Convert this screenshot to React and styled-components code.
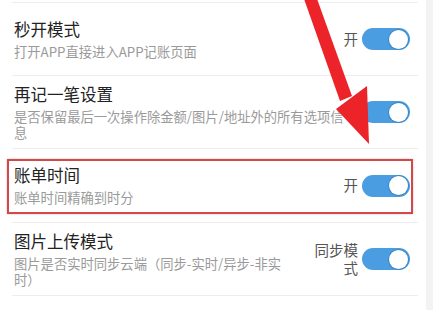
import React from "react";
import styled, { createGlobalStyle } from "styled-components";

const Global = createGlobalStyle`
  html, body { margin: 0; padding: 0; background: #f3f3f3; }
  body { font-family: "Noto Sans CJK SC", "Noto Sans", sans-serif; }
`;

const Page = styled.div`
  position: relative;
  width: 433px;
  height: 310px;
  overflow: hidden;
  background: #f3f3f3;
`;

const Card = styled.div`
  background: #fff;
  margin-right: 7px;
  height: 100%;
  padding-top: 2px;
  box-sizing: border-box;
`;

const Row = styled.div`
  position: relative;
  display: flex;
  align-items: center;
  gap: 17px;
  min-height: ${(p) => (p.$tall ? "73px" : "72px")};
  margin: 0 8px 0 12px;
  border-top: 1px solid #ededed;
`;

const TextCol = styled.div`
  flex: 1;
  min-width: 0;
  padding-left: 2px;
  display: flex;
  flex-direction: column;
  gap: 5px;
`;

const Title = styled.div`
  font-size: 16.5px;
  line-height: 20px;
  color: #222;
`;

const Sub = styled.div`
  font-size: 13.3px;
  line-height: 16px;
  color: #9a9a9a;
`;

const Right = styled.div`
  display: flex;
  align-items: center;
  gap: 4px;
  padding-right: 8px;
`;

const Label = styled.div`
  font-size: 14.5px;
  line-height: 18.5px;
  color: #555;
  text-align: right;
  width: ${(p) => (p.$narrow ? "48px" : "auto")};
`;

const Track = styled.div`
  width: 48px;
  height: 22px;
  border-radius: 11px;
  background: #4b9de1;
  display: flex;
  align-items: center;
  justify-content: flex-end;
  padding: 0 2px;
  box-sizing: border-box;
`;

const Knob = styled.div`
  width: 19px;
  height: 19px;
  border-radius: 50%;
  background: #fff;
  box-shadow: 0 0 0 1px #3a86c8;
`;

const Highlight = styled.div`
  position: absolute;
  top: 10px;
  left: -5px;
  right: 5px;
  bottom: 8px;
  border: 2px solid #d6474a;
  box-shadow: 0 0 2px rgba(0, 0, 0, 0.25);
  pointer-events: none;
`;

const ArrowLayer = styled.svg`
  position: absolute;
  left: 0;
  top: 0;
  pointer-events: none;
`;

const Toggle = () => (
  <Track>
    <Knob />
  </Track>
);

const rows = [
  { title: "秒开模式", sub: "打开APP直接进入APP记账页面", label: "开" },
  { title: "再记一笔设置", sub: "是否保留最后一次操作除金额/图片/地址外的所有选项信息" },
  { title: "账单时间", sub: "账单时间精确到时分", label: "开", highlight: true },
  { title: "图片上传模式", sub: "图片是否实时同步云端（同步-实时/异步-非实时）", label: "同步模式", narrow: true },
  { title: "记账页面默认显示分类图标", sub: "" },
];

export default function App() {
  return (
    <Page>
      <Global />
      <Card>
        {rows.map((r) => (
          <Row key={r.title} $tall={r.highlight}>
            <TextCol>
              <Title>{r.title}</Title>
              {r.sub && <Sub>{r.sub}</Sub>}
            </TextCol>
            <Right>
              {r.label && <Label $narrow={r.narrow}>{r.label}</Label>}
              <Toggle />
            </Right>
            {r.highlight && <Highlight />}
          </Row>
        ))}
      </Card>
      <ArrowLayer width="433" height="310" viewBox="0 0 433 310">
        <polygon points="303,-4 316,-4 352,96 340,101" fill="#ec2328" />
        <polygon points="336,109 367,86 369,144" fill="#ec2328" />
      </ArrowLayer>
    </Page>
  );
}
